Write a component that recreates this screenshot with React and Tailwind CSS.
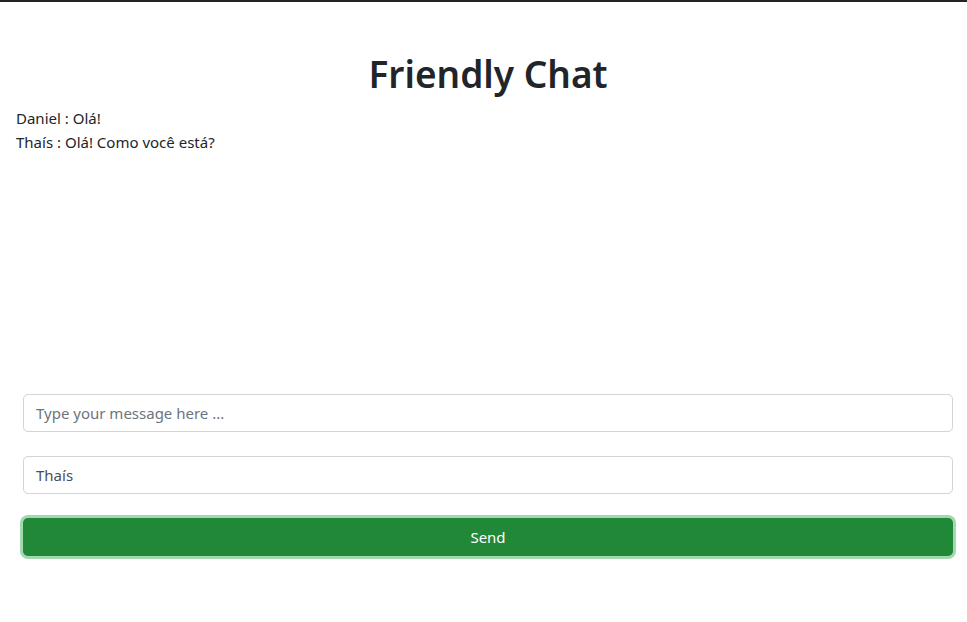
import { useState } from 'react'

const MESSAGES = [
  { id: 1, author: 'Daniel', text: 'Olá!' },
  { id: 2, author: 'Thaís', text: 'Olá! Como você está?' },
]

export default function App() {
  const [message, setMessage] = useState('')
  const [name, setName] = useState('Thaís')

  return (
    <div
      className="min-h-screen border-t-2 border-[#212529] bg-white text-[#212529]"
      style={{ fontFamily: '"Noto Sans", "Open Sans", sans-serif' }}
    >
      <h1 className="mt-12 pl-[9px] text-center text-[37px] font-semibold leading-[48px]">Friendly Chat</h1>

      <div className="h-[296px] px-4 pt-2 text-[15px] leading-6">
        {MESSAGES.map((m) => (
          <div key={m.id}>
            {m.author} : {m.text}
          </div>
        ))}
      </div>

      <form className="flex flex-col pl-[23px] pr-[14px]" onSubmit={(e) => e.preventDefault()}>
        <input
          value={message}
          onChange={(e) => setMessage(e.target.value)}
          placeholder="Type your message here ..."
          className="h-[38px] w-full rounded-[5px] border border-[#ced4da] px-3 text-[15px] text-[#495057] outline-none placeholder:text-[#6c757d]"
        />
        <input
          value={name}
          onChange={(e) => setName(e.target.value)}
          className="mt-6 h-[38px] w-full rounded-[5px] border border-[#ced4da] px-3 text-[15px] text-[#495057] outline-none"
        />
        <button
          type="submit"
          className="mt-6 h-[38px] w-full rounded-[5px] bg-[#218838] text-[15px] text-white shadow-[0_0_0_3px_rgba(72,180,97,0.5)]"
        >
          Send
        </button>
      </form>
    </div>
  )
}
